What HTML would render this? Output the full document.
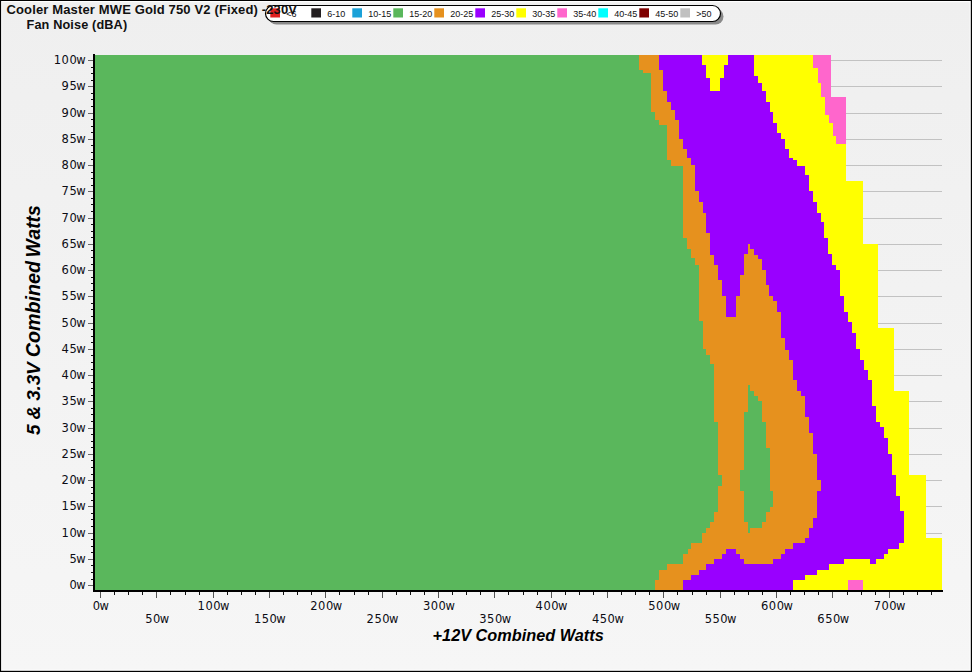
<!DOCTYPE html>
<html><head><meta charset="utf-8"><title>Fan Noise</title>
<style>
html,body{margin:0;padding:0;background:#F2F2F2;}
body{width:972px;height:672px;overflow:hidden;}
svg{display:block}
text{font-family:"Liberation Sans",Arial,sans-serif;fill:#111}
.ax{font-family:"DejaVu Sans","Liberation Sans",sans-serif;font-size:11.5px;fill:#0c0c14}
.lg{font-size:9px;fill:#111}
.tt{font-size:13px;font-weight:bold;fill:#111;letter-spacing:0.14px}
.xl{font-size:16.3px;font-weight:bold;font-style:italic;fill:#000}
.yl{font-size:19px;font-weight:bold;font-style:italic;fill:#000}
</style></head><body>
<svg width="972" height="672" viewBox="0 0 972 672">
<defs><linearGradient id="bg" x1="0" y1="0" x2="0" y2="1"><stop offset="0" stop-color="#EFEFEF"/><stop offset="1" stop-color="#F6F6F6"/></linearGradient></defs>
<rect x="0" y="0" width="972" height="672" fill="url(#bg)"/>
<g shape-rendering="crispEdges">
<line x1="95" y1="585.5" x2="942" y2="585.5" stroke="#C2C2C2" stroke-width="1"/>
<line x1="95" y1="559.5" x2="942" y2="559.5" stroke="#C2C2C2" stroke-width="1"/>
<line x1="95" y1="533.5" x2="942" y2="533.5" stroke="#C2C2C2" stroke-width="1"/>
<line x1="95" y1="506.5" x2="942" y2="506.5" stroke="#C2C2C2" stroke-width="1"/>
<line x1="95" y1="480.5" x2="942" y2="480.5" stroke="#C2C2C2" stroke-width="1"/>
<line x1="95" y1="454.5" x2="942" y2="454.5" stroke="#C2C2C2" stroke-width="1"/>
<line x1="95" y1="428.5" x2="942" y2="428.5" stroke="#C2C2C2" stroke-width="1"/>
<line x1="95" y1="401.5" x2="942" y2="401.5" stroke="#C2C2C2" stroke-width="1"/>
<line x1="95" y1="375.5" x2="942" y2="375.5" stroke="#C2C2C2" stroke-width="1"/>
<line x1="95" y1="349.5" x2="942" y2="349.5" stroke="#C2C2C2" stroke-width="1"/>
<line x1="95" y1="323.5" x2="942" y2="323.5" stroke="#C2C2C2" stroke-width="1"/>
<line x1="95" y1="296.5" x2="942" y2="296.5" stroke="#C2C2C2" stroke-width="1"/>
<line x1="95" y1="270.5" x2="942" y2="270.5" stroke="#C2C2C2" stroke-width="1"/>
<line x1="95" y1="244.5" x2="942" y2="244.5" stroke="#C2C2C2" stroke-width="1"/>
<line x1="95" y1="218.5" x2="942" y2="218.5" stroke="#C2C2C2" stroke-width="1"/>
<line x1="95" y1="191.5" x2="942" y2="191.5" stroke="#C2C2C2" stroke-width="1"/>
<line x1="95" y1="165.5" x2="942" y2="165.5" stroke="#C2C2C2" stroke-width="1"/>
<line x1="95" y1="139.5" x2="942" y2="139.5" stroke="#C2C2C2" stroke-width="1"/>
<line x1="95" y1="113.5" x2="942" y2="113.5" stroke="#C2C2C2" stroke-width="1"/>
<line x1="95" y1="86.5" x2="942" y2="86.5" stroke="#C2C2C2" stroke-width="1"/>
<line x1="95" y1="60.5" x2="942" y2="60.5" stroke="#C2C2C2" stroke-width="1"/>
</g>
<g shape-rendering="crispEdges">
<polygon points="95,55 830.75,55 830.75,97 845.75,97 845.75,180.5 863,180.5 863,243.75 878.25,243.75 878.25,327.5 894,327.5 894,391.25 909.25,391.25 909.25,475 926,475 926,537.75 941.5,537.75 941.5,590 95,590" fill="#FFFF00"/>
<polygon points="813,55 813,67.5 817.5,67.5 817.5,82.5 821.25,82.5 821.25,97 825,97 825,115 828.75,115 828.75,123 832.5,123 832.5,136.25 836.25,136.25 836.25,143.75 845.75,143.75 845.75,97 830.75,97 830.75,55" fill="#FF66CC"/>
<rect x="848.25" y="580.25" width="14.5" height="9.75" fill="#FF66CC"/>
<polygon points="95,55 753.75,55 753.75,75.5 758,75.5 758,83 762,83 762,90.75 766.25,90.75 766.25,102 769.5,102 769.5,112 773,112 773,123 777,123 777,132.5 780.75,132.5 780.75,138.75 785,138.75 785,149.25 789.25,149.25 789.25,157.5 793,157.5 793,160 797,160 797,165.5 804.5,165.5 804.5,175 808.75,175 808.75,191.25 812.5,191.25 812.5,202 816.75,202 816.75,212.5 820.5,212.5 820.5,222 824.25,222 824.25,237.5 828.25,237.5 828.25,253.75 832,253.75 832,264.5 835.75,264.5 835.75,270 839.5,270 839.5,296.25 843.75,296.25 843.75,312 848,312 848,322 852,322 852,332.5 855.75,332.5 855.75,348.75 860,348.75 860,359.5 863.75,359.5 863.75,370 867.75,370 867.75,380 871.75,380 871.75,406.25 875.75,406.25 875.75,422 880,422 880,427 884.25,427 884.25,437.5 888.25,437.5 888.25,453.75 892,453.75 892,475 895.75,475 895.75,496.25 899.5,496.25 899.5,511.25 904,511.25 904,542.75 899,542.75 899,549 888.25,549 888.25,554 884,554 884,559 844,559 844,564 829,564 829,569.5 817,569.5 817,575.25 804.75,575.25 804.75,580.25 792.75,580.25 792.75,590 95,590" fill="#9900FF"/>
<rect x="702" y="55" width="26" height="10" fill="#FFFF00"/>
<rect x="706" y="65" width="18" height="13" fill="#FFFF00"/>
<rect x="710" y="78" width="10" height="12.75" fill="#FFFF00"/>
<rect x="870.25" y="559" width="5.75" height="5" fill="#9900FF"/>
<polygon points="95,55 658.75,55 658.75,69.5 663,69.5 663,90.75 667,90.75 667,102 671.25,102 671.25,110 675,110 675,120 678.75,120 678.75,138.75 683,138.75 683,149.25 687,149.25 687,157.5 691.25,157.5 691.25,165 695,165 695,191.25 699,191.25 699,202 702.5,202 702.5,212.5 706.25,212.5 706.25,233 710,233 710,243.75 750,243.75 750,248.75 753.75,248.75 753.75,254.5 757.5,254.5 757.5,258.75 761.75,258.75 761.75,270 765.5,270 765.5,285 769.25,285 769.25,296.25 773,296.25 773,301.25 777,301.25 777,312 781.25,312 781.25,338 785,338 785,350 789.25,350 789.25,359.5 793.25,359.5 793.25,380 797,380 797,391 800.75,391 800.75,396 805,396 805,417 808.75,417 808.75,432.5 813,432.5 813,453.75 817,453.75 817,480 820.75,480 820.75,490.5 817,490.5 817,517.5 813,517.5 813,527.5 808.75,527.5 808.75,538 805,538 805,543 793,543 793,548.75 785,548.75 785,553.75 781.1,553.75 781.1,558.9 773.2,558.9 773.2,563.9 706.2,563.9 706.2,569.7 699.4,569.7 699.4,574.7 691.1,574.7 691.1,579.8 683.2,579.8 683.2,590 95,590" fill="#E6911E"/>
<polygon points="710,243.75 710,254.5 714.25,254.5 714.25,264.5 718,264.5 718,280 722,280 722,296.25 726.25,296.25 726.25,317 735.75,317 735.75,296.25 740,296.25 740,275 744.25,275 744.25,253.75 748,253.75 748,243.75" fill="#9900FF"/>
<rect x="726.1" y="548.8" width="9.9" height="5" fill="#9900FF"/>
<rect x="722" y="553.8" width="18.1" height="5.1" fill="#9900FF"/>
<rect x="714.1" y="558.9" width="30" height="5" fill="#9900FF"/>
<polygon points="95,55 638.75,55 638.75,69.5 643,69.5 643,73 650.75,73 650.75,112 655,112 655,120 658.75,120 658.75,124.5 666.75,124.5 666.75,160 670.75,160 670.75,166.25 683,166.25 683,237.5 687,237.5 687,248.75 690.75,248.75 690.75,258 695,258 695,265 698.75,265 698.75,321.25 702.5,321.25 702.5,348.75 706.25,348.75 706.25,354.5 710,354.5 710,363.75 713.75,363.75 713.75,422 717.5,422 717.5,474.5 721.75,474.5 721.75,485.5 717.75,485.5 717.75,512 714,512 714,522 710.1,522 710.1,527.9 706.2,527.9 706.2,533 702.2,533 702.2,543 691.4,543 691.4,548.8 687.5,548.8 687.5,553.8 683.2,553.8 683.2,563.9 667.3,563.9 667.3,569.7 659.4,569.7 659.4,579.8 655,579.8 655,590 95,590" fill="#5AB75C"/>
<rect x="748" y="385" width="2" height="6" fill="#5AB75C"/>
<rect x="748" y="391" width="5.75" height="5" fill="#5AB75C"/>
<rect x="748" y="396" width="9.5" height="5" fill="#5AB75C"/>
<rect x="748" y="401" width="13.75" height="11" fill="#5AB75C"/>
<rect x="744.25" y="412" width="17.5" height="10" fill="#5AB75C"/>
<rect x="744.25" y="422" width="21.5" height="26" fill="#5AB75C"/>
<rect x="744.25" y="448" width="25.25" height="21.5" fill="#5AB75C"/>
<rect x="740" y="469.5" width="29.5" height="21" fill="#5AB75C"/>
<rect x="744" y="490.5" width="29" height="16.5" fill="#5AB75C"/>
<rect x="744" y="507" width="25.5" height="5" fill="#5AB75C"/>
<rect x="744" y="512" width="21.75" height="10" fill="#5AB75C"/>
<rect x="748" y="522" width="14" height="5.7" fill="#5AB75C"/>
<rect x="748" y="527.7" width="2" height="4.9" fill="#5AB75C"/>
</g>
<g shape-rendering="crispEdges">
<rect x="93" y="54" width="2" height="538" fill="#000"/>
<rect x="93" y="590" width="850" height="2" fill="#000"/>
<line x1="88" y1="585.5" x2="93" y2="585.5" stroke="#666" stroke-width="1"/>
<line x1="91" y1="579.5" x2="93" y2="579.5" stroke="#111" stroke-width="1"/>
<line x1="91" y1="572.5" x2="93" y2="572.5" stroke="#111" stroke-width="1"/>
<line x1="91" y1="565.5" x2="93" y2="565.5" stroke="#111" stroke-width="1"/>
<line x1="88" y1="559.5" x2="93" y2="559.5" stroke="#666" stroke-width="1"/>
<line x1="91" y1="552.5" x2="93" y2="552.5" stroke="#111" stroke-width="1"/>
<line x1="91" y1="546.5" x2="93" y2="546.5" stroke="#111" stroke-width="1"/>
<line x1="91" y1="539.5" x2="93" y2="539.5" stroke="#111" stroke-width="1"/>
<line x1="88" y1="533.5" x2="93" y2="533.5" stroke="#666" stroke-width="1"/>
<line x1="91" y1="526.5" x2="93" y2="526.5" stroke="#111" stroke-width="1"/>
<line x1="91" y1="519.5" x2="93" y2="519.5" stroke="#111" stroke-width="1"/>
<line x1="91" y1="513.5" x2="93" y2="513.5" stroke="#111" stroke-width="1"/>
<line x1="88" y1="506.5" x2="93" y2="506.5" stroke="#666" stroke-width="1"/>
<line x1="91" y1="500.5" x2="93" y2="500.5" stroke="#111" stroke-width="1"/>
<line x1="91" y1="493.5" x2="93" y2="493.5" stroke="#111" stroke-width="1"/>
<line x1="91" y1="487.5" x2="93" y2="487.5" stroke="#111" stroke-width="1"/>
<line x1="88" y1="480.5" x2="93" y2="480.5" stroke="#666" stroke-width="1"/>
<line x1="91" y1="474.5" x2="93" y2="474.5" stroke="#111" stroke-width="1"/>
<line x1="91" y1="467.5" x2="93" y2="467.5" stroke="#111" stroke-width="1"/>
<line x1="91" y1="460.5" x2="93" y2="460.5" stroke="#111" stroke-width="1"/>
<line x1="88" y1="454.5" x2="93" y2="454.5" stroke="#666" stroke-width="1"/>
<line x1="91" y1="447.5" x2="93" y2="447.5" stroke="#111" stroke-width="1"/>
<line x1="91" y1="441.5" x2="93" y2="441.5" stroke="#111" stroke-width="1"/>
<line x1="91" y1="434.5" x2="93" y2="434.5" stroke="#111" stroke-width="1"/>
<line x1="88" y1="428.5" x2="93" y2="428.5" stroke="#666" stroke-width="1"/>
<line x1="91" y1="421.5" x2="93" y2="421.5" stroke="#111" stroke-width="1"/>
<line x1="91" y1="414.5" x2="93" y2="414.5" stroke="#111" stroke-width="1"/>
<line x1="91" y1="408.5" x2="93" y2="408.5" stroke="#111" stroke-width="1"/>
<line x1="88" y1="401.5" x2="93" y2="401.5" stroke="#666" stroke-width="1"/>
<line x1="91" y1="395.5" x2="93" y2="395.5" stroke="#111" stroke-width="1"/>
<line x1="91" y1="388.5" x2="93" y2="388.5" stroke="#111" stroke-width="1"/>
<line x1="91" y1="382.5" x2="93" y2="382.5" stroke="#111" stroke-width="1"/>
<line x1="88" y1="375.5" x2="93" y2="375.5" stroke="#666" stroke-width="1"/>
<line x1="91" y1="369.5" x2="93" y2="369.5" stroke="#111" stroke-width="1"/>
<line x1="91" y1="362.5" x2="93" y2="362.5" stroke="#111" stroke-width="1"/>
<line x1="91" y1="355.5" x2="93" y2="355.5" stroke="#111" stroke-width="1"/>
<line x1="88" y1="349.5" x2="93" y2="349.5" stroke="#666" stroke-width="1"/>
<line x1="91" y1="342.5" x2="93" y2="342.5" stroke="#111" stroke-width="1"/>
<line x1="91" y1="336.5" x2="93" y2="336.5" stroke="#111" stroke-width="1"/>
<line x1="91" y1="329.5" x2="93" y2="329.5" stroke="#111" stroke-width="1"/>
<line x1="88" y1="323.5" x2="93" y2="323.5" stroke="#666" stroke-width="1"/>
<line x1="91" y1="316.5" x2="93" y2="316.5" stroke="#111" stroke-width="1"/>
<line x1="91" y1="309.5" x2="93" y2="309.5" stroke="#111" stroke-width="1"/>
<line x1="91" y1="303.5" x2="93" y2="303.5" stroke="#111" stroke-width="1"/>
<line x1="88" y1="296.5" x2="93" y2="296.5" stroke="#666" stroke-width="1"/>
<line x1="91" y1="290.5" x2="93" y2="290.5" stroke="#111" stroke-width="1"/>
<line x1="91" y1="283.5" x2="93" y2="283.5" stroke="#111" stroke-width="1"/>
<line x1="91" y1="277.5" x2="93" y2="277.5" stroke="#111" stroke-width="1"/>
<line x1="88" y1="270.5" x2="93" y2="270.5" stroke="#666" stroke-width="1"/>
<line x1="91" y1="264.5" x2="93" y2="264.5" stroke="#111" stroke-width="1"/>
<line x1="91" y1="257.5" x2="93" y2="257.5" stroke="#111" stroke-width="1"/>
<line x1="91" y1="250.5" x2="93" y2="250.5" stroke="#111" stroke-width="1"/>
<line x1="88" y1="244.5" x2="93" y2="244.5" stroke="#666" stroke-width="1"/>
<line x1="91" y1="237.5" x2="93" y2="237.5" stroke="#111" stroke-width="1"/>
<line x1="91" y1="231.5" x2="93" y2="231.5" stroke="#111" stroke-width="1"/>
<line x1="91" y1="224.5" x2="93" y2="224.5" stroke="#111" stroke-width="1"/>
<line x1="88" y1="218.5" x2="93" y2="218.5" stroke="#666" stroke-width="1"/>
<line x1="91" y1="211.5" x2="93" y2="211.5" stroke="#111" stroke-width="1"/>
<line x1="91" y1="204.5" x2="93" y2="204.5" stroke="#111" stroke-width="1"/>
<line x1="91" y1="198.5" x2="93" y2="198.5" stroke="#111" stroke-width="1"/>
<line x1="88" y1="191.5" x2="93" y2="191.5" stroke="#666" stroke-width="1"/>
<line x1="91" y1="185.5" x2="93" y2="185.5" stroke="#111" stroke-width="1"/>
<line x1="91" y1="178.5" x2="93" y2="178.5" stroke="#111" stroke-width="1"/>
<line x1="91" y1="172.5" x2="93" y2="172.5" stroke="#111" stroke-width="1"/>
<line x1="88" y1="165.5" x2="93" y2="165.5" stroke="#666" stroke-width="1"/>
<line x1="91" y1="159.5" x2="93" y2="159.5" stroke="#111" stroke-width="1"/>
<line x1="91" y1="152.5" x2="93" y2="152.5" stroke="#111" stroke-width="1"/>
<line x1="91" y1="145.5" x2="93" y2="145.5" stroke="#111" stroke-width="1"/>
<line x1="88" y1="139.5" x2="93" y2="139.5" stroke="#666" stroke-width="1"/>
<line x1="91" y1="132.5" x2="93" y2="132.5" stroke="#111" stroke-width="1"/>
<line x1="91" y1="126.5" x2="93" y2="126.5" stroke="#111" stroke-width="1"/>
<line x1="91" y1="119.5" x2="93" y2="119.5" stroke="#111" stroke-width="1"/>
<line x1="88" y1="113.5" x2="93" y2="113.5" stroke="#666" stroke-width="1"/>
<line x1="91" y1="106.5" x2="93" y2="106.5" stroke="#111" stroke-width="1"/>
<line x1="91" y1="99.5" x2="93" y2="99.5" stroke="#111" stroke-width="1"/>
<line x1="91" y1="93.5" x2="93" y2="93.5" stroke="#111" stroke-width="1"/>
<line x1="88" y1="86.5" x2="93" y2="86.5" stroke="#666" stroke-width="1"/>
<line x1="91" y1="80.5" x2="93" y2="80.5" stroke="#111" stroke-width="1"/>
<line x1="91" y1="73.5" x2="93" y2="73.5" stroke="#111" stroke-width="1"/>
<line x1="91" y1="67.5" x2="93" y2="67.5" stroke="#111" stroke-width="1"/>
<line x1="88" y1="60.5" x2="93" y2="60.5" stroke="#666" stroke-width="1"/>
<line x1="100.5" y1="592" x2="100.5" y2="598" stroke="#555" stroke-width="1"/>
<line x1="114.5" y1="592" x2="114.5" y2="595" stroke="#111" stroke-width="1"/>
<line x1="128.5" y1="592" x2="128.5" y2="595" stroke="#111" stroke-width="1"/>
<line x1="142.5" y1="592" x2="142.5" y2="595" stroke="#111" stroke-width="1"/>
<line x1="156.5" y1="592" x2="156.5" y2="598" stroke="#555" stroke-width="1"/>
<line x1="170.5" y1="592" x2="170.5" y2="595" stroke="#111" stroke-width="1"/>
<line x1="185.5" y1="592" x2="185.5" y2="595" stroke="#111" stroke-width="1"/>
<line x1="199.5" y1="592" x2="199.5" y2="595" stroke="#111" stroke-width="1"/>
<line x1="213.5" y1="592" x2="213.5" y2="598" stroke="#555" stroke-width="1"/>
<line x1="227.5" y1="592" x2="227.5" y2="595" stroke="#111" stroke-width="1"/>
<line x1="241.5" y1="592" x2="241.5" y2="595" stroke="#111" stroke-width="1"/>
<line x1="255.5" y1="592" x2="255.5" y2="595" stroke="#111" stroke-width="1"/>
<line x1="269.5" y1="592" x2="269.5" y2="598" stroke="#555" stroke-width="1"/>
<line x1="283.5" y1="592" x2="283.5" y2="595" stroke="#111" stroke-width="1"/>
<line x1="297.5" y1="592" x2="297.5" y2="595" stroke="#111" stroke-width="1"/>
<line x1="311.5" y1="592" x2="311.5" y2="595" stroke="#111" stroke-width="1"/>
<line x1="325.5" y1="592" x2="325.5" y2="598" stroke="#555" stroke-width="1"/>
<line x1="339.5" y1="592" x2="339.5" y2="595" stroke="#111" stroke-width="1"/>
<line x1="354.5" y1="592" x2="354.5" y2="595" stroke="#111" stroke-width="1"/>
<line x1="368.5" y1="592" x2="368.5" y2="595" stroke="#111" stroke-width="1"/>
<line x1="382.5" y1="592" x2="382.5" y2="598" stroke="#555" stroke-width="1"/>
<line x1="396.5" y1="592" x2="396.5" y2="595" stroke="#111" stroke-width="1"/>
<line x1="410.5" y1="592" x2="410.5" y2="595" stroke="#111" stroke-width="1"/>
<line x1="424.5" y1="592" x2="424.5" y2="595" stroke="#111" stroke-width="1"/>
<line x1="438.5" y1="592" x2="438.5" y2="598" stroke="#555" stroke-width="1"/>
<line x1="452.5" y1="592" x2="452.5" y2="595" stroke="#111" stroke-width="1"/>
<line x1="466.5" y1="592" x2="466.5" y2="595" stroke="#111" stroke-width="1"/>
<line x1="480.5" y1="592" x2="480.5" y2="595" stroke="#111" stroke-width="1"/>
<line x1="494.5" y1="592" x2="494.5" y2="598" stroke="#555" stroke-width="1"/>
<line x1="508.5" y1="592" x2="508.5" y2="595" stroke="#111" stroke-width="1"/>
<line x1="523.5" y1="592" x2="523.5" y2="595" stroke="#111" stroke-width="1"/>
<line x1="537.5" y1="592" x2="537.5" y2="595" stroke="#111" stroke-width="1"/>
<line x1="551.5" y1="592" x2="551.5" y2="598" stroke="#555" stroke-width="1"/>
<line x1="565.5" y1="592" x2="565.5" y2="595" stroke="#111" stroke-width="1"/>
<line x1="579.5" y1="592" x2="579.5" y2="595" stroke="#111" stroke-width="1"/>
<line x1="593.5" y1="592" x2="593.5" y2="595" stroke="#111" stroke-width="1"/>
<line x1="607.5" y1="592" x2="607.5" y2="598" stroke="#555" stroke-width="1"/>
<line x1="621.5" y1="592" x2="621.5" y2="595" stroke="#111" stroke-width="1"/>
<line x1="635.5" y1="592" x2="635.5" y2="595" stroke="#111" stroke-width="1"/>
<line x1="649.5" y1="592" x2="649.5" y2="595" stroke="#111" stroke-width="1"/>
<line x1="663.5" y1="592" x2="663.5" y2="598" stroke="#555" stroke-width="1"/>
<line x1="677.5" y1="592" x2="677.5" y2="595" stroke="#111" stroke-width="1"/>
<line x1="692.5" y1="592" x2="692.5" y2="595" stroke="#111" stroke-width="1"/>
<line x1="706.5" y1="592" x2="706.5" y2="595" stroke="#111" stroke-width="1"/>
<line x1="720.5" y1="592" x2="720.5" y2="598" stroke="#555" stroke-width="1"/>
<line x1="734.5" y1="592" x2="734.5" y2="595" stroke="#111" stroke-width="1"/>
<line x1="748.5" y1="592" x2="748.5" y2="595" stroke="#111" stroke-width="1"/>
<line x1="762.5" y1="592" x2="762.5" y2="595" stroke="#111" stroke-width="1"/>
<line x1="776.5" y1="592" x2="776.5" y2="598" stroke="#555" stroke-width="1"/>
<line x1="790.5" y1="592" x2="790.5" y2="595" stroke="#111" stroke-width="1"/>
<line x1="804.5" y1="592" x2="804.5" y2="595" stroke="#111" stroke-width="1"/>
<line x1="818.5" y1="592" x2="818.5" y2="595" stroke="#111" stroke-width="1"/>
<line x1="832.5" y1="592" x2="832.5" y2="598" stroke="#555" stroke-width="1"/>
<line x1="847.5" y1="592" x2="847.5" y2="595" stroke="#111" stroke-width="1"/>
<line x1="861.5" y1="592" x2="861.5" y2="595" stroke="#111" stroke-width="1"/>
<line x1="875.5" y1="592" x2="875.5" y2="595" stroke="#111" stroke-width="1"/>
<line x1="889.5" y1="592" x2="889.5" y2="598" stroke="#555" stroke-width="1"/>
<line x1="903.5" y1="592" x2="903.5" y2="595" stroke="#111" stroke-width="1"/>
<line x1="917.5" y1="592" x2="917.5" y2="595" stroke="#111" stroke-width="1"/>
<line x1="931.5" y1="592" x2="931.5" y2="595" stroke="#111" stroke-width="1"/>
</g>
<text class="ax" text-anchor="middle" x="73.06 80.89" y="589">0w</text>
<text class="ax" text-anchor="middle" x="73.06 80.89" y="562.8">5w</text>
<text class="ax" text-anchor="middle" x="65.22 73.05 80.88" y="536.5">10w</text>
<text class="ax" text-anchor="middle" x="65.22 73.05 80.88" y="510.2">15w</text>
<text class="ax" text-anchor="middle" x="65.22 73.05 80.88" y="484">20w</text>
<text class="ax" text-anchor="middle" x="65.22 73.05 80.88" y="457.8">25w</text>
<text class="ax" text-anchor="middle" x="65.22 73.05 80.88" y="431.5">30w</text>
<text class="ax" text-anchor="middle" x="65.22 73.05 80.88" y="405.2">35w</text>
<text class="ax" text-anchor="middle" x="65.22 73.05 80.88" y="379">40w</text>
<text class="ax" text-anchor="middle" x="65.22 73.05 80.88" y="352.8">45w</text>
<text class="ax" text-anchor="middle" x="65.22 73.05 80.88" y="326.5">50w</text>
<text class="ax" text-anchor="middle" x="65.22 73.05 80.88" y="300.2">55w</text>
<text class="ax" text-anchor="middle" x="65.22 73.05 80.88" y="274">60w</text>
<text class="ax" text-anchor="middle" x="65.22 73.05 80.88" y="247.8">65w</text>
<text class="ax" text-anchor="middle" x="65.22 73.05 80.88" y="221.5">70w</text>
<text class="ax" text-anchor="middle" x="65.22 73.05 80.88" y="195.2">75w</text>
<text class="ax" text-anchor="middle" x="65.22 73.05 80.88" y="169">80w</text>
<text class="ax" text-anchor="middle" x="65.22 73.05 80.88" y="142.8">85w</text>
<text class="ax" text-anchor="middle" x="65.22 73.05 80.88" y="116.5">90w</text>
<text class="ax" text-anchor="middle" x="65.22 73.05 80.88" y="90.2">95w</text>
<text class="ax" text-anchor="middle" x="57.39 65.22 73.05 80.88" y="64">100w</text>
<text class="ax" text-anchor="middle" x="96.39 104.22" y="609.6">0w</text>
<text class="ax" text-anchor="middle" x="148.81 156.64 164.47" y="622.8">50w</text>
<text class="ax" text-anchor="middle" x="201.24 209.07 216.9 224.73" y="609.6">100w</text>
<text class="ax" text-anchor="middle" x="257.57 265.4 273.24 281.06" y="622.8">150w</text>
<text class="ax" text-anchor="middle" x="313.92 321.75 329.57 337.4" y="609.6">200w</text>
<text class="ax" text-anchor="middle" x="370.25 378.08 385.91 393.75" y="622.8">250w</text>
<text class="ax" text-anchor="middle" x="426.6 434.43 442.25 450.09" y="609.6">300w</text>
<text class="ax" text-anchor="middle" x="482.94 490.76 498.59 506.42" y="622.8">350w</text>
<text class="ax" text-anchor="middle" x="539.27 547.11 554.94 562.76" y="609.6">400w</text>
<text class="ax" text-anchor="middle" x="595.61 603.44 611.27 619.1" y="622.8">450w</text>
<text class="ax" text-anchor="middle" x="651.95 659.78 667.62 675.44" y="609.6">500w</text>
<text class="ax" text-anchor="middle" x="708.29 716.12 723.96 731.78" y="622.8">550w</text>
<text class="ax" text-anchor="middle" x="764.63 772.47 780.3 788.12" y="609.6">600w</text>
<text class="ax" text-anchor="middle" x="820.97 828.8 836.63 844.46" y="622.8">650w</text>
<text class="ax" text-anchor="middle" x="877.31 885.14 892.98 900.8" y="609.6">700w</text>
<rect x="268.5" y="8.5" width="455" height="16" rx="8" ry="8" fill="#8a8a8a"/>
<rect x="265.5" y="5.5" width="455" height="16" rx="8" ry="8" fill="#fff" stroke="#000" stroke-width="1.2"/>
<rect x="270.3" y="8.3" width="9.7" height="9.2" fill="#E02020"/>
<text class="lg" x="286.3" y="17.3">&lt;6</text>
<rect x="311.3" y="8.3" width="9.7" height="9.2" fill="#231F20"/>
<text class="lg" x="327.3" y="17.3">6-10</text>
<rect x="352.3" y="8.3" width="9.7" height="9.2" fill="#1BA1D8"/>
<text class="lg" x="368.3" y="17.3">10-15</text>
<rect x="393.3" y="8.3" width="9.7" height="9.2" fill="#5AB75C"/>
<text class="lg" x="409.3" y="17.3">15-20</text>
<rect x="434.3" y="8.3" width="9.7" height="9.2" fill="#E6911E"/>
<text class="lg" x="450.3" y="17.3">20-25</text>
<rect x="475.3" y="8.3" width="9.7" height="9.2" fill="#9900FF"/>
<text class="lg" x="491.3" y="17.3">25-30</text>
<rect x="516.3" y="8.3" width="9.7" height="9.2" fill="#FFFF00"/>
<text class="lg" x="532.3" y="17.3">30-35</text>
<rect x="557.3" y="8.3" width="9.7" height="9.2" fill="#FF66CC"/>
<text class="lg" x="573.3" y="17.3">35-40</text>
<rect x="598.3" y="8.3" width="9.7" height="9.2" fill="#00FFFF"/>
<text class="lg" x="614.3" y="17.3">40-45</text>
<rect x="639.3" y="8.3" width="9.7" height="9.2" fill="#800000"/>
<text class="lg" x="655.3" y="17.3">45-50</text>
<rect x="680.3" y="8.3" width="9.7" height="9.2" fill="#C0C0C0"/>
<text class="lg" x="696.3" y="17.3">&gt;50</text>
<text class="tt" x="6.5" y="13.7">Cooler Master MWE Gold 750 V2 (Fixed) -230V</text>
<text class="tt" x="26.5" y="28.7" style="font-size:12.7px">Fan Noise (dBA)</text>
<text class="xl" x="518.2" y="640.8" text-anchor="middle">+12V Combined Watts</text>
<text class="yl" transform="translate(40.3,435.1) rotate(-90)"><tspan letter-spacing="-0.15">5 &amp; 3.3V </tspan><tspan font-size="19.7">Combined</tspan><tspan dx="-1.8" font-size="19.3"> Watts</tspan></text>
<rect x="1" y="1" width="970" height="1.2" fill="#fff"/>
<rect x="1" y="669.7" width="970" height="1.2" fill="#fff"/>
<rect x="1" y="1" width="1.2" height="670" fill="#fff"/>
<rect x="969.7" y="1" width="1.2" height="670" fill="#fff"/>
<rect x="0" y="0" width="972" height="1" fill="#000"/>
<rect x="0" y="670.8" width="972" height="1.2" fill="#000"/>
<rect x="0" y="0" width="1.1" height="672" fill="#000"/>
<rect x="970.8" y="0" width="1.2" height="672" fill="#000"/>
</svg>
</body></html>
